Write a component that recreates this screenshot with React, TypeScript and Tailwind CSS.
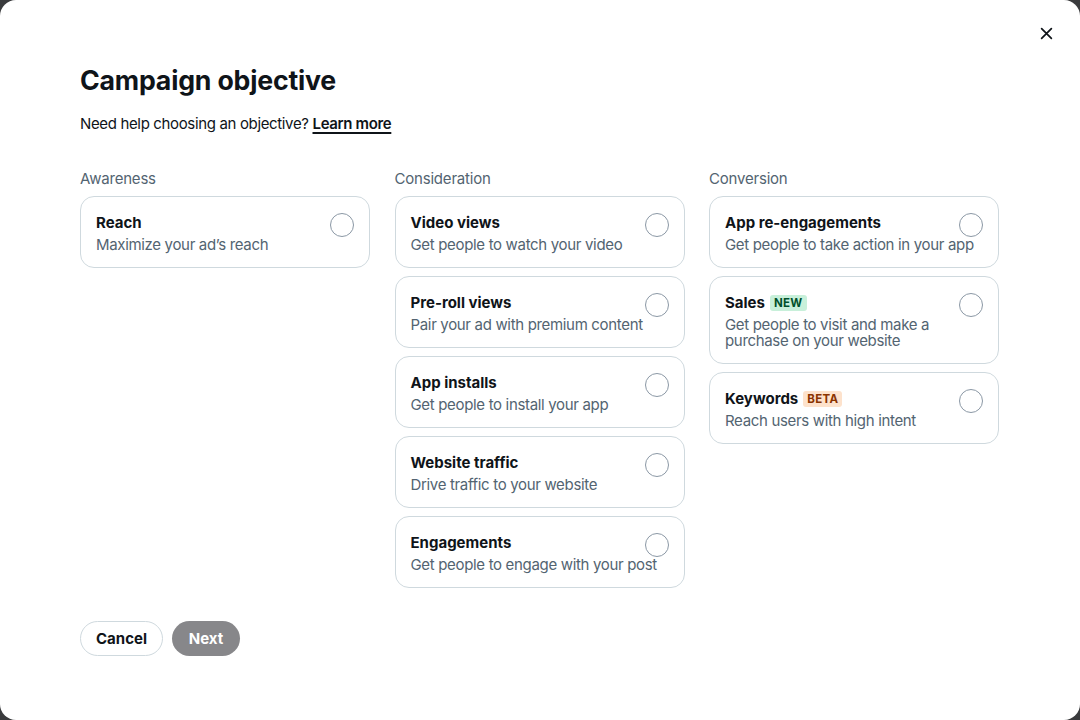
import React from "react";

type Opt = { title: string; desc: string; badge?: "NEW" | "BETA" };

const cols: { label: string; items: Opt[] }[] = [
  { label: "Awareness", items: [{ title: "Reach", desc: "Maximize your ad\u2019s reach" }] },
  {
    label: "Consideration",
    items: [
      { title: "Video views", desc: "Get people to watch your video" },
      { title: "Pre-roll views", desc: "Pair your ad with premium content" },
      { title: "App installs", desc: "Get people to install your app" },
      { title: "Website traffic", desc: "Drive traffic to your website" },
      { title: "Engagements", desc: "Get people to engage with your post" },
    ],
  },
  {
    label: "Conversion",
    items: [
      { title: "App re-engagements", desc: "Get people to take action in your app" },
      { title: "Sales", desc: "Get people to visit and make a purchase on your website", badge: "NEW" },
      { title: "Keywords", desc: "Reach users with high intent", badge: "BETA" },
    ],
  },
];

function Card({ o }: { o: Opt }) {
  return (
    <div className="relative rounded-[14px] border border-[#cfd9de] px-[15px] pt-[16px] pb-[14px] bg-white">
      <div className="flex items-center h-5 text-[15px] leading-5 font-bold text-[#0f1419]">
        <span>{o.title}</span>
        {o.badge === "NEW" && (
          <span className="ml-[5px] rounded-[3px] bg-[#c8f0da] px-[4px] text-[11.5px] leading-[16px] font-bold tracking-[0.3px] text-[#00502b]">
            NEW
          </span>
        )}
        {o.badge === "BETA" && (
          <span className="ml-[5px] rounded-[3px] bg-[#fde2cc] px-[4px] text-[11.5px] leading-[16px] font-bold tracking-[0.3px] text-[#8a3300]">
            BETA
          </span>
        )}
      </div>
      <div className={"mt-1 text-[15px] leading-4 tracking-[-0.33px] text-[#536471]" + (o.badge === "NEW" ? " pr-[40px]" : "")}>
        {o.desc}
      </div>
      <div className="absolute right-[15px] top-[16px] h-6 w-6 rounded-full border-[1.5px] border-[#8b98a5]" />
    </div>
  );
}

export default function App() {
  return (
    <div className="h-[720px] w-[1080px] bg-[#3a3b3d]" style={{ fontFamily: "Inter, 'Noto Sans', sans-serif" }}>
      <div className="relative h-full w-full rounded-[16px] bg-white px-20 pt-[64px]">
        <button className="absolute right-[26px] top-[25px] flex h-4 w-4 items-center justify-center text-[#0f1419]">
          <svg width="13" height="13" viewBox="0 0 12 12" fill="none" stroke="currentColor" strokeWidth="1.6" strokeLinecap="round">
            <path d="M1.5 1.5l9 9M10.5 1.5l-9 9" />
          </svg>
        </button>
        <h1 className="text-[26.7px] leading-8 font-bold tracking-[-0.2px] text-[#0f1419]">Campaign objective</h1>
        <p className="mt-[18px] text-[15px] leading-5 tracking-[-0.35px] text-[#0f1419]">
          Need help choosing an objective?{" "}
          <span className="font-semibold underline underline-offset-[3px] decoration-[1.5px]">Learn more</span>
        </p>
        <div className="mt-[34px] grid grid-cols-[290px_290px_290px] gap-x-[24.5px]">
          {cols.map((c) => (
            <div key={c.label}>
              <div className="pt-[1px] text-[15px] leading-5 tracking-[-0.2px] text-[#536471]">{c.label}</div>
              <div className="mt-[7px] flex flex-col gap-2">
                {c.items.map((o) => (
                  <Card key={o.title} o={o} />
                ))}
              </div>
            </div>
          ))}
        </div>
        <div className="mt-[33px] flex gap-[9px]">
          <button className="h-[35px] w-[83px] rounded-full border border-[#cfd9de] pt-[1px] text-[15px] font-bold text-[#0f1419]">
            Cancel
          </button>
          <button className="h-[35px] w-[68px] rounded-full bg-[#87878a] pt-[1px] text-[15px] font-bold text-white">Next</button>
        </div>
      </div>
    </div>
  );
}
